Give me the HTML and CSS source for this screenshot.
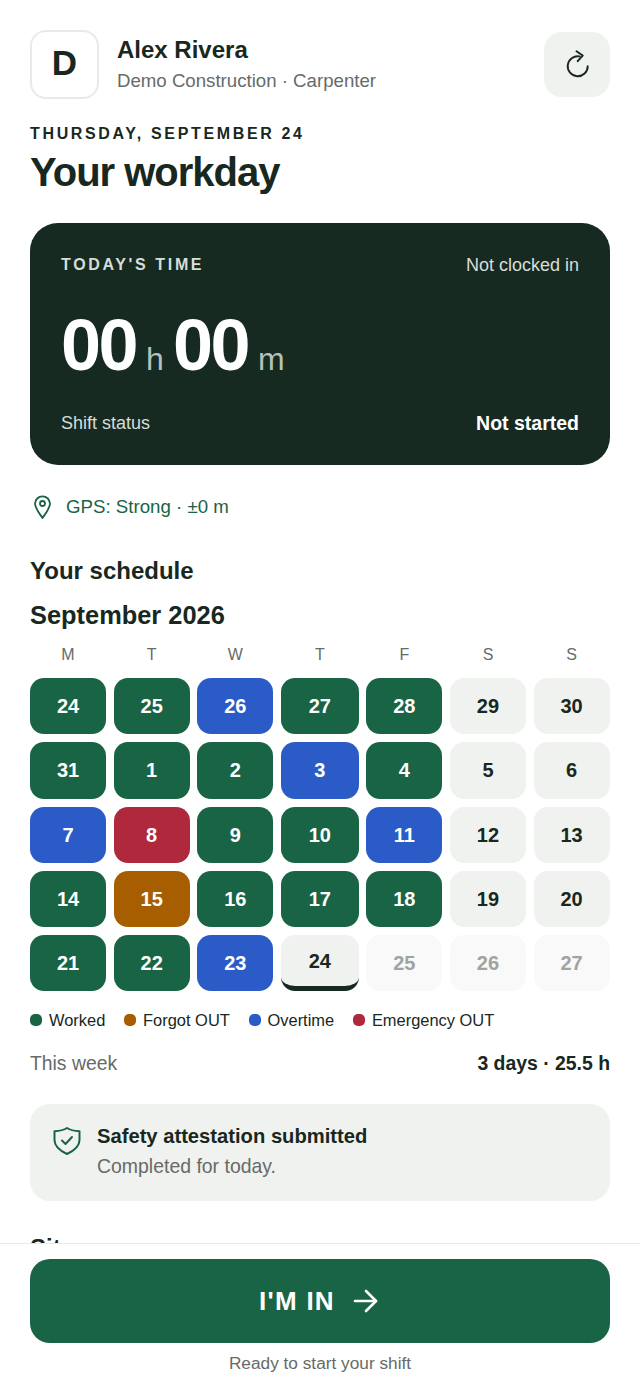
FILE: index.html
```html
<!DOCTYPE html>
<html lang="en">
<head>
  <meta charset="UTF-8">
  <title>Your workday</title>
  <meta name="viewport" content="width=device-width, initial-scale=1.0">
  <link rel="stylesheet" href="styles.css">
</head>
<body>
  <main class="content">
    <header class="top">
      <div class="avatar">D</div>
      <div class="who">
        <div class="who-name">Alex Rivera</div>
        <div class="who-role">Demo Construction · Carpenter</div>
      </div>
      <button class="refresh" aria-label="Refresh">
        <svg width="24" height="28" viewBox="0 0 24 28" fill="none" stroke="currentColor" stroke-width="1.9" stroke-linecap="round" stroke-linejoin="round">
          <path d="M14.500 6.400a10 10 0 1 0 8.200 9.800"/>
          <path d="M11.500 1.200l6.200 4.300-5 5.700"/>
        </svg>
      </button>
    </header>

    <p class="date">THURSDAY, SEPTEMBER 24</p>
    <h1>Your workday</h1>

    <section class="time-card">
      <div class="time-top">
        <span class="time-label">TODAY'S TIME</span>
        <span class="time-state">Not clocked in</span>
      </div>
      <div class="clock">
        <span class="clock-num">00</span><span class="clock-unit">h</span>
        <span class="clock-num">00</span><span class="clock-unit">m</span>
      </div>
      <div class="time-bottom">
        <span class="shift-label">Shift status</span>
        <span class="shift-value">Not started</span>
      </div>
    </section>

    <div class="gps">
      <svg width="25" height="24" viewBox="0 0 25 24" fill="none" stroke="currentColor" stroke-width="1.8" stroke-linecap="round" stroke-linejoin="round">
        <path d="M12.500 23c-2-3.200-7.500-9.500-7.500-14.200a7.500 7.500 0 0 1 15 0C20 13.500 14.500 19.800 12.500 23z"/>
        <circle cx="12.500" cy="8.500" r="2.500"/>
      </svg>
      <span>GPS: Strong · ±0 m</span>
    </div>

    <h2 class="schedule-title">Your schedule</h2>
    <h2 class="month">September 2026</h2>

    <div class="weekdays">
      <span>M</span><span>T</span><span>W</span><span>T</span><span>F</span><span>S</span><span>S</span>
    </div>

    <div class="calendar">
      <div class="day worked">24</div><div class="day worked">25</div><div class="day overtime">26</div><div class="day worked">27</div><div class="day worked">28</div><div class="day off">29</div><div class="day off">30</div>
      <div class="day worked">31</div><div class="day worked">1</div><div class="day worked">2</div><div class="day overtime">3</div><div class="day worked">4</div><div class="day off">5</div><div class="day off">6</div>
      <div class="day overtime">7</div><div class="day emergency">8</div><div class="day worked">9</div><div class="day worked">10</div><div class="day overtime">11</div><div class="day off">12</div><div class="day off">13</div>
      <div class="day worked">14</div><div class="day forgot">15</div><div class="day worked">16</div><div class="day worked">17</div><div class="day worked">18</div><div class="day off">19</div><div class="day off">20</div>
      <div class="day worked">21</div><div class="day worked">22</div><div class="day overtime">23</div><div class="day today">24</div><div class="day future">25</div><div class="day future">26</div><div class="day future">27</div>
    </div>

    <div class="legend">
      <span class="legend-item"><i class="dot worked"></i>Worked</span>
      <span class="legend-item"><i class="dot forgot"></i>Forgot OUT</span>
      <span class="legend-item"><i class="dot overtime"></i>Overtime</span>
      <span class="legend-item"><i class="dot emergency"></i>Emergency OUT</span>
    </div>

    <div class="week">
      <span class="week-label">This week</span>
      <span class="week-value">3 days · 25.5 h</span>
    </div>

    <section class="safety">
      <svg class="safety-icon" width="30" height="30" viewBox="0 0 30 30" fill="none" stroke="currentColor" stroke-width="2" stroke-linecap="round" stroke-linejoin="round">
        <path d="M15 2c3 2 7 3 12.500 3.200V14c0 6.500-5 10.500-12.500 14C7.500 24.500 2.500 20.500 2.500 14V5.200C8 5 12 4 15 2z"/>
        <path d="M10 14.500l3.500 3.500 6.500-7"/>
      </svg>
      <div>
        <div class="safety-title">Safety attestation submitted</div>
        <div class="safety-sub">Completed for today.</div>
      </div>
    </section>

    <h2 class="site-title">Site</h2>
  </main>

  <footer class="action-bar">
    <button class="clock-in">
      <span>I'M IN</span>
      <svg width="25" height="24" viewBox="0 0 25 24" fill="none" stroke="currentColor" stroke-width="2.600" stroke-linecap="round" stroke-linejoin="round">
        <path d="M2 12h21"/>
        <path d="M13 2l10 10-10 10"/>
      </svg>
    </button>
    <p class="action-note">Ready to start your shift</p>
  </footer>
</body>
</html>
```

FILE: styles.css
```css
:root {
  --ink: #182821;
  --muted: #666b68;
  --green: #196445;
  --dark: #172a22;
  --blue: #2a5bc7;
  --red: #b0283c;
  --amber: #a65e00;
  --soft: #f0f2ef;
}

* {
  box-sizing: border-box;
}

html, body {
  height: 100%;
}

body {
  margin: 0;
  height: 1385px;
  overflow: hidden;
  position: relative;
  background: #fff;
  color: var(--ink);
  font-family: "Liberation Sans", Arial, sans-serif;
}

.content {
  padding: 30px 30px 0;
}

.top {
  display: flex;
  align-items: center;
  height: 68px;
}

.avatar {
  width: 69px;
  height: 69px;
  flex: none;
  display: flex;
  align-items: center;
  justify-content: center;
  border: 2px solid #e8eae9;
  border-radius: 16px;
  font-size: 35px;
  font-weight: 700;
  padding-bottom: 3px;
}

.who {
  flex: 1;
  margin-left: 18px;
  padding-top: 2px;
}

.who-name {
  margin-top: 1px;
  font-size: 24px;
  font-weight: 700;
  line-height: 30px;
}

.who-role {
  margin-top: 1px;
  font-size: 18.650px;
  line-height: 30px;
  color: var(--muted);
}

.refresh {
  width: 66px;
  height: 65px;
  flex: none;
  display: flex;
  align-items: center;
  justify-content: center;
  border: 0;
  border-radius: 18px;
  background: var(--soft);
  color: var(--ink);
  padding: 0;
}

.date {
  margin: 24px 0 0;
  font-size: 16px;
  line-height: 24px;
  font-weight: 700;
  letter-spacing: 2.650px;
}

h1 {
  margin: 0;
  font-size: 40px;
  line-height: 52px;
  font-weight: 700;
  letter-spacing: -1px;
}

.time-card {
  margin-top: 25px;
  height: 242px;
  padding: 31px 31px 0;
  border-radius: 28px;
  background: var(--dark);
  color: #fff;
}

.time-top, .time-bottom {
  display: flex;
  align-items: center;
  justify-content: space-between;
}

.time-label {
  font-size: 16px;
  line-height: 22px;
  font-weight: 700;
  letter-spacing: 2.650px;
  color: #d5ded9;
}

.time-state {
  font-size: 18px;
  line-height: 22px;
  color: #d5ded9;
}

.clock {
  margin-top: 27px;
  display: flex;
  align-items: baseline;
  height: 84px;
}

.clock-num {
  font-size: 72px;
  line-height: 84px;
  font-weight: 700;
  letter-spacing: -2.500px;
}

.clock-unit {
  margin: 0 9px 0 10px;
  font-size: 32px;
  color: #b3c2ba;
}

.time-bottom {
  margin-top: 23px;
}

.shift-label {
  font-size: 18px;
  line-height: 26px;
  color: #d5ded9;
}

.shift-value {
  font-size: 19.500px;
  line-height: 26px;
  font-weight: 700;
}

.gps {
  margin-top: 28px;
  display: flex;
  align-items: center;
  gap: 11px;
  height: 28px;
  font-size: 18.700px;
  color: var(--green);
}

.schedule-title, .month, .site-title {
  margin: 0;
  font-size: 24px;
  line-height: 30px;
  font-weight: 700;
}

.schedule-title {
  margin-top: 35px;
}

.month {
  margin-top: 14px;
  font-size: 25.400px;
}

.weekdays, .calendar {
  display: grid;
  grid-template-columns: 76px 76px 76px 77.700px 76px 76px 76px;
  column-gap: 7.670px;
}

.weekdays {
  margin-top: 13px;
  font-size: 16px;
  line-height: 24px;
  text-align: center;
  color: var(--muted);
}

.calendar {
  margin-top: 11px;
  row-gap: 8px;
}

.day {
  height: 56.250px;
  display: flex;
  align-items: center;
  justify-content: center;
  padding-top: 1px;
  border-radius: 14px;
  font-size: 20px;
  font-weight: 700;
}

.day.worked { background: var(--green); color: #fff; }
.day.overtime { background: var(--blue); color: #fff; }
.day.emergency { background: var(--red); color: #fff; }
.day.forgot { background: var(--amber); color: #fff; }
.day.off { background: var(--soft); color: var(--ink); }
.day.future { background: #f8f9f8; color: #a0a3a1; }

.day.today {
  background: var(--soft);
  border-bottom: 5px solid var(--dark);
}

.legend {
  margin-top: 17px;
  display: flex;
  gap: 18.700px;
  font-size: 16.450px;
  line-height: 24px;
  color: var(--ink);
}

.legend-item {
  display: flex;
  align-items: center;
  gap: 7px;
}

.dot {
  width: 12px;
  height: 12px;
  border-radius: 5px;
}

.dot.worked { background: var(--green); }
.dot.forgot { background: var(--amber); }
.dot.overtime { background: var(--blue); }
.dot.emergency { background: var(--red); }

.week {
  margin-top: 18px;
  display: flex;
  justify-content: space-between;
  align-items: center;
  line-height: 26px;
}

.week-label {
  font-size: 19.350px;
  color: var(--muted);
}

.week-value {
  font-size: 19.400px;
  font-weight: 700;
}

.safety {
  margin-top: 28px;
  height: 97px;
  padding: 18px 22px;
  display: flex;
  gap: 15px;
  border-radius: 20px;
  background: var(--soft);
}

.safety-icon {
  flex: none;
  margin-top: 4px;
  color: var(--green);
}

.safety-title {
  font-size: 20.200px;
  line-height: 28px;
  font-weight: 700;
}

.safety-sub {
  margin-top: 2px;
  font-size: 19.450px;
  line-height: 28px;
  color: var(--muted);
}

.site-title {
  margin-top: 32px;
}

.action-bar {
  position: absolute;
  left: 0;
  right: 0;
  bottom: 0;
  height: 142px;
  padding: 15px 30px 0;
  background: #fff;
  border-top: 1px solid #e8eae9;
}

.clock-in {
  width: 100%;
  height: 84px;
  display: flex;
  align-items: center;
  justify-content: center;
  gap: 18px;
  padding: 0 3px 0 0;
  border: 0;
  border-radius: 20px;
  background: var(--green);
  color: #fff;
  font-family: inherit;
  font-size: 26px;
  font-weight: 700;
  letter-spacing: 1.250px;
}

.action-note {
  margin: 8px 0 0;
  font-size: 17.250px;
  line-height: 24px;
  text-align: center;
  color: var(--muted);
}
```
